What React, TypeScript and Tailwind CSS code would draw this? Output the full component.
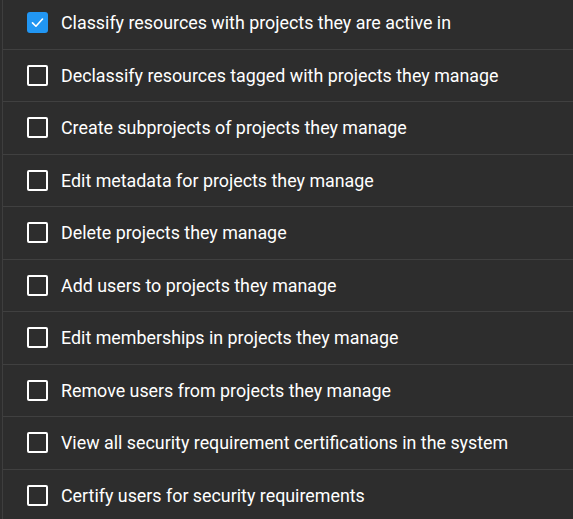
import React, { useState } from 'react';

const PERMISSIONS = [
  'Classify resources with projects they are active in',
  'Declassify resources tagged with projects they manage',
  'Create subprojects of projects they manage',
  'Edit metadata for projects they manage',
  'Delete projects they manage',
  'Add users to projects they manage',
  'Edit memberships in projects they manage',
  'Remove users from projects they manage',
  'View all security requirement certifications in the system',
  'Certify users for security requirements',
];

const App: React.FC = () => {
  const [checked, setChecked] = useState<boolean[]>(PERMISSIONS.map((_, i) => i === 0));

  const toggle = (i: number) => {
    setChecked(prev => prev.map((v, j) => (j === i ? !v : v)));
  };

  return (
    <div className="w-[573px] h-[519px] overflow-hidden bg-[#2d2d2d] font-['Roboto',sans-serif]">
      <div className="ml-[2px] border-l border-[#3e3e3e] -mt-[3px]">
        {PERMISSIONS.map((label, i) => (
          <label
            key={label}
            className="flex items-center h-[52.5px] border-b border-[#404040] cursor-pointer select-none"
          >
            <span className="w-[58px] shrink-0 flex items-center">
              <input
                type="checkbox"
                className="sr-only"
                checked={checked[i]}
                onChange={() => toggle(i)}
              />
              {checked[i] ? (
                <span className="ml-[24px] w-[21px] h-[21px] rounded-[3px] bg-[#2196f3] flex items-center justify-center">
                  <svg width="15" height="15" viewBox="0 0 24 24" fill="none" stroke="white" strokeWidth="2.6" strokeLinecap="round" strokeLinejoin="round">
                    <path d="M4 12.5 L9.5 18 L20 6.5" />
                  </svg>
                </span>
              ) : (
                <span className="ml-[24px] w-[21px] h-[21px] rounded-[2px] border-2 border-white" />
              )}
            </span>
            <span className="text-white text-[17.85px] leading-none pt-[1px]">{label}</span>
          </label>
        ))}
      </div>
    </div>
  );
};

export default App;
